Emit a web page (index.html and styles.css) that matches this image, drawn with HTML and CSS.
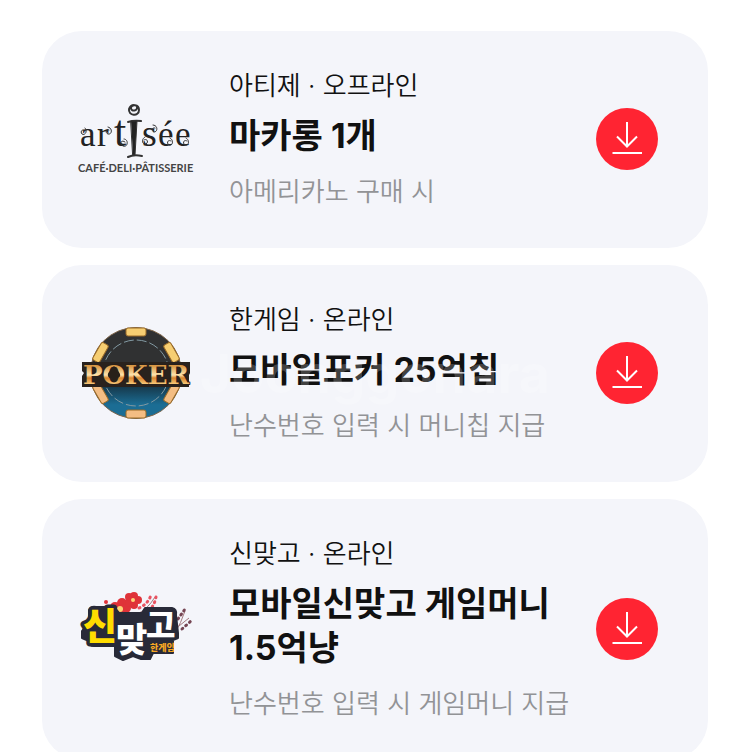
FILE: index.html
```html
<!DOCTYPE html>
<html lang="ko">
<head>
<meta charset="utf-8">
<meta name="viewport" content="width=device-width, initial-scale=1">
<title>쿠폰</title>
<link rel="stylesheet" href="styles.css">
</head>
<body>
<svg class="defs" aria-hidden="true">
  <symbol id="download" viewBox="0 0 62 62">
    <path d="M31 14V38M21 28.500L31 38.500L41 28.500M16.500 45H46" fill="none" stroke="#fff" stroke-width="2"/>
  </symbol>
</svg>
<ul class="coupons">
  <li class="coupon">
    <svg class="logo" viewBox="0 0 118 100" role="img" aria-label="artisée">
      <text class="script" y="57" font-size="35"><tspan x="3">a</tspan><tspan x="20">r</tspan><tspan x="37" font-size="44">t</tspan><tspan x="65" font-size="38">s</tspan><tspan x="81">é</tspan><tspan x="98">e</tspan></text>
      <g fill="none" stroke="#333" stroke-linecap="round">
        <path d="M51 33Q57 31 64 32M51 68Q57 65 65 67" stroke-width="2"/>
        <path d="M54 32H60L58 66H56Z" fill="#222"/>
        <path d="M60 18C61 22 54 23 54 19C54 15 62 15 62 21C62 28 51 27 52 20C53 17 55 16 57 16" stroke-width="2"/>
        <path d="M8 42C5 39 3 43 5 45C8 47 11 42 8 39"/>
        <path d="M32 41C29 40 28 44 31 45C35 46 36 39 31 38"/>
        <path d="M48 53C44 50 42 55 46 57C51 59 52 50 47 50"/>
        <path d="M78 39C75 38 74 42 77 43C81 43 81 36 76 36"/>
        <path d="M67 51C70 49 72 53 69 55C65 56 64 50 68 48"/>
        <path d="M94 52C91 50 89 54 92 56C96 57 97 51 93 49M110 52C107 50 105 54 108 56C112 57 113 51 109 49"/>
      </g>
      <text class="tagline" x="1" y="83" font-size="11">CAFÉ·DELI·PÂTISSERIE</text>
    </svg>
    <div class="info">
      <p class="brand">아티제 · 오프라인</p>
      <h2 class="title">마카롱 1개</h2>
      <p class="note">아메리카노 구매 시</p>
    </div>
    <button class="download" type="button" aria-label="마카롱 쿠폰 다운로드"><svg><use href="#download"/></svg></button>
  </li>
  <li class="coupon">
    <svg class="logo" viewBox="0 0 118 100" role="img" aria-label="POKER">
      <defs>
        <linearGradient id="chip" x2="0" y2="1"><stop offset=".4" stop-color="#303132"/><stop offset=".65" stop-color="#16394c"/><stop offset=".85" stop-color="#1b6d94"/></linearGradient>
        <linearGradient id="gold" x2="0" y2="1"><stop offset=".2" stop-color="#d99845"/><stop offset=".5" stop-color="#ffe5ae"/><stop offset=".6" stop-color="#d8852f"/><stop offset=".8" stop-color="#f8c979"/></linearGradient>
      </defs>
      <circle cx="59" cy="50" r="45.500" fill="url(#chip)" stroke="#80664a"/>
      <circle cx="59" cy="50" r="33" fill="none" stroke="#8299a2" stroke-dasharray="10 3"/>
      <g fill="#f6ce72" stroke="#9a6a27">
        <rect x="49" y="5" width="20" height="8" rx="2"/>
        <rect x="49" y="5" width="20" height="8" rx="2" transform="rotate(60 59 50)"/>
        <rect x="49" y="5" width="20" height="8" rx="2" fill="#f3bd83" transform="rotate(120 59 50)"/>
        <rect x="49" y="5" width="20" height="8" rx="2" fill="#f3bd83" transform="rotate(180 59 50)"/>
        <rect x="49" y="5" width="20" height="8" rx="2" fill="#f3bd83" transform="rotate(240 59 50)"/>
        <rect x="49" y="5" width="20" height="8" rx="2" transform="rotate(300 59 50)"/>
      </g>
      <path d="M5 39H113V50L112 52V64H5V53L7 50L5 48Z" fill="#29221d"/>
      <text class="poker" x="59" y="61" font-size="26">POKER</text>
      <path d="M37 43C34 48 30 49 31 53C32 56 35 55 36 54L34 58H40L38 54C41 56 44 54 43 51C42 48 39 47 37 43Z" fill="#272019"/>
    </svg>
    <div class="info">
      <p class="brand">한게임 · 온라인</p>
      <h2 class="title">모바일포커 25억칩</h2>
      <p class="note">난수번호 입력 시 머니칩 지급</p>
    </div>
    <button class="download" type="button" aria-label="모바일포커 쿠폰 다운로드"><svg><use href="#download"/></svg></button>
    <span class="watermark">Joonggonara</span>
  </li>
  <li class="coupon">
    <svg class="logo" viewBox="0 0 118 100" role="img" aria-label="한게임 신맞고">
      <g fill="none" stroke="#a47b80"><path d="M60 35Q70 31 78 18M98 54Q104 44 108 32M102 47L112 39"/></g>
      <g fill="none" stroke="#e95361" stroke-width="3" stroke-linecap="round" stroke-dasharray="1 4"><path d="M62 29Q71 25 74 16M68 35Q77 29 79 18"/><path d="M101 40L108 30M105 50L114 42" stroke="#754553"/></g>
      <g fill="#df3339"><circle cx="29" cy="23" r="2"/>
        <circle cx="45" cy="24" r="5"/><circle cx="49" cy="29" r="5"/><circle cx="47" cy="35" r="5"/><circle cx="39" cy="34" r="5"/><circle cx="38" cy="28" r="5"/>
        <circle cx="57" cy="17" r="4"/><circle cx="61" cy="21" r="4"/><circle cx="57" cy="26" r="4"/><circle cx="52" cy="24" r="4"/><circle cx="52" cy="18" r="4"/>
      </g>
      <g fill="#ffd477"><circle cx="43" cy="30" r="3"/><circle cx="56" cy="21" r="2"/></g>
      <path d="M12 31Q14 27 19 28H37L42 34H65L68 29H95Q100 30 99 36L101 54V59L96 61V74H76L73 80H64L56 77L46 81L38 77V67H17Q12 67 12 62L5 59V52L12 43Z" fill="#282a38" stroke="#282a38" stroke-width="2" stroke-linejoin="round"/>
      <text class="syllables"><tspan class="yellow" x="6" y="61" font-size="37">신</tspan><tspan x="39" y="73" font-size="34">맞</tspan><tspan x="69" y="58" font-size="32">고</tspan></text>
      <text class="hangame" x="73" y="72" font-size="9">한게임</text>
    </svg>
    <div class="info">
      <p class="brand">신맞고 · 온라인</p>
      <h2 class="title">모바일신맞고 게임머니 1.5억냥</h2>
      <p class="note">난수번호 입력 시 게임머니 지급</p>
    </div>
    <button class="download" type="button" aria-label="모바일신맞고 쿠폰 다운로드"><svg><use href="#download"/></svg></button>
  </li>
</ul>
</body>
</html>
```
FILE: styles.css
```css
* { box-sizing: border-box; }
html { overflow-x: hidden; }
body {
  margin: 0;
  background: #fff;
  color: #111;
  font-family: Inter, "Noto Sans CJK KR", sans-serif;
}
.defs { display: none; }
.coupons {
  list-style: none;
  margin: 0;
  padding: 31px 42px 0;
  display: grid;
  gap: 17px;
}
.coupon {
  position: relative;
  display: grid;
  grid-template-columns: 118px 1fr 62px;
  align-items: center;
  column-gap: 24px;
  padding: 36px 50px 37px 35px;
  border-radius: 40px;
  background: #f4f5fa;
}
.logo { width: 118px; height: 100px; }
.info { min-width: 0; padding-left: 10px; }
p, h2 { margin: 0; }
.brand { font-size: 26px; line-height: 38px; font-weight: 350; }
.title { margin: 9px 0 15px; font-size: 34px; line-height: 44px; font-weight: 700; word-break: keep-all; }
.note { font-size: 26px; line-height: 38px; font-weight: 350; color: #929396; white-space: nowrap; }
.download {
  width: 62px;
  height: 62px;
  padding: 0;
  border: 0;
  border-radius: 50%;
  background: #ff2432;
  cursor: pointer;
}
.download svg { display: block; width: 62px; height: 62px; }
.watermark {
  position: absolute;
  inset: 0;
  display: grid;
  place-items: center;
  font-size: 54px;
  font-weight: 700;
  color: #fff;
  opacity: .2;
  pointer-events: none;
}
.script { font-family: "Liberation Serif", serif; fill: #222; }
.tagline { font-family: Lato, sans-serif; font-weight: 700; fill: #444; }
.poker {
  font-family: "DejaVu Serif", serif;
  font-weight: 700;
  text-anchor: middle;
  fill: url(#gold);
  stroke: #29201a;
  stroke-width: 2px;
  stroke-linejoin: round;
  paint-order: stroke;
}
.syllables, .hangame {
  font-family: "Noto Sans CJK KR", sans-serif;
  font-weight: 900;
  fill: #fff;
}
.yellow { fill: #ffdc00; stroke: #282a38; stroke-width: 7px; stroke-linejoin: round; paint-order: stroke; }
.hangame { fill: #f5a623; }
```
